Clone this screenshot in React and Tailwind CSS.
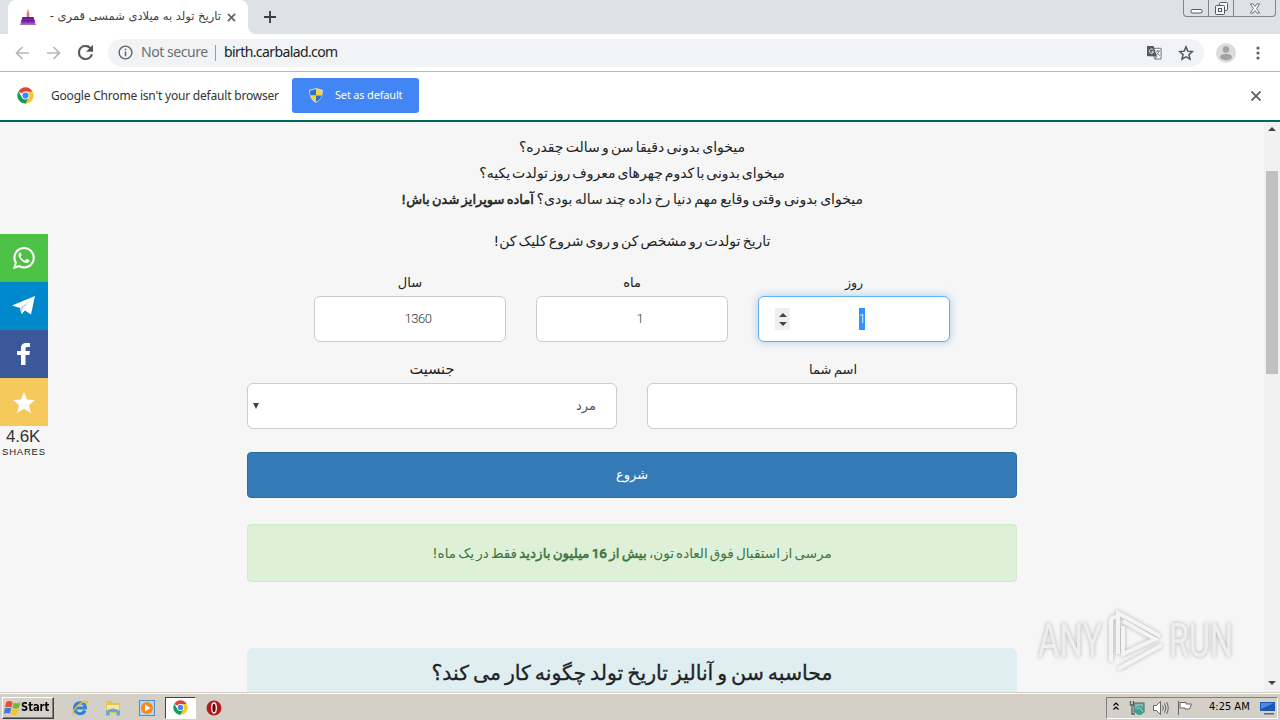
import React from "react";

const FA = "font-['DejaVu_Sans',sans-serif]";

function ChromeLogo({ className }) {
  return (
    <svg viewBox="0 0 48 48" className={className}>
      <circle cx="24" cy="24" r="23" fill="#fff" />
      <path d="M24 24 L4.1 12.5 A23 23 0 0 1 43.9 12.5 Z" fill="#db4437" />
      <path d="M24 13 H44.2 A23 23 0 0 1 24 47 L33.5 29.5 Z" fill="#fbc52d" />
      <path d="M4.1 12.5 A23 23 0 0 0 24 47 L33.5 29.5 L24 34 L14.5 29.5 Z" fill="#0f9d58" />
      <circle cx="24" cy="24" r="11" fill="#fff" />
      <circle cx="24" cy="24" r="8.7" fill="#4285f4" />
    </svg>
  );
}

function TabStrip() {
  return (
    <div className="flex h-[34px] shrink-0 items-start bg-[#dee1e6]">
      <div className="ml-2 flex h-[34px] w-[240px] items-center rounded-t-lg bg-white pl-3">
        <svg viewBox="0 0 16 16" className="h-4 w-4 shrink-0">
          <rect x="6.700" y="3" width="2.600" height="6" fill="#ef6b7b" />
          <path d="M8 0 C9.500 2 9.200 4 8 4 C6.800 4 6.500 2 8 0" fill="#f7a54a" />
          <rect x="2" y="8" width="12" height="4" rx="1" fill="#6a1b9a" />
          <rect x="1" y="10.500" width="14" height="4.500" rx="1" fill="#9b34b8" />
          <path d="M2 11 H14 V12 L12 13 L10 12 L8 13.500 L6 12 L4 13 L2 12 Z" fill="#6a1b9a" />
          <rect x="0" y="14.500" width="16" height="1.500" fill="#9c7bb0" />
        </svg>
        <div dir="rtl" className={`ml-[10px] flex h-5 w-[175px] items-center whitespace-nowrap text-[11.5px] text-[#3c4043] ${FA}`}>
          تاریخ تولد به میلادی شمسی قمری -
        </div>
        <svg viewBox="0 0 10 10" className="ml-[6px] h-[9px] w-[9px] shrink-0">
          <path d="M1 1 L9 9 M9 1 L1 9" stroke="#5f6368" strokeWidth="1.900" />
        </svg>
      </div>
      <svg viewBox="0 0 8 8" className="h-2 w-2 self-end"><path d="M0 0 V8 H8 A8 8 0 0 1 0 0" fill="#fff" /></svg>
      <svg viewBox="0 0 12 12" className="mt-[11px] ml-2 h-3 w-3"><path d="M6 0 V12 M0 6 H12" stroke="#3c4043" strokeWidth="1.900" /></svg>
      <div className="mr-1 ml-auto flex h-[17px] w-[93px] rounded-b border border-t-0 border-[#80848c] bg-[#dfe1e6]">
        <div className="flex w-[25px] items-center justify-center border-r border-[#80848c]">
          <svg viewBox="0 0 13 13" className="h-[13px] w-[13px]"><rect x="1" y="7.500" width="11" height="3.500" rx="1" fill="#fff" stroke="#555a62" /></svg>
        </div>
        <div className="flex w-[25px] items-center justify-center border-r border-[#80848c]">
          <svg viewBox="0 0 13 13" className="h-[13px] w-[13px]" fill="#f4f5f6" stroke="#555a62"><rect x="4.500" y=".5" width="8" height="8" rx="1" /><rect x=".5" y="3.500" width="9" height="9" rx="1" /><rect x="3.500" y="6.500" width="3" height="3" /></svg>
        </div>
        <div className="flex flex-1 items-center justify-center">
          <svg viewBox="0 0 12 12" className="h-[11px] w-3"><path d="M1 1 H4 L6 3.800 L8 1 H11 L7.700 6 L11 11 H8 L6 8.200 L4 11 H1 L4.300 6 Z" fill="#fff" stroke="#555a62" strokeWidth=".9" /></svg>
        </div>
      </div>
    </div>
  );
}

function Toolbar() {
  return (
    <div className="flex h-[38px] shrink-0 items-center border-b border-[#b4b6b8] bg-white">
      <svg viewBox="0 0 14 14" className="ml-[15px] h-[14px] w-[14px]" fill="none" stroke="#b5b7ba" strokeWidth="1.700"><path d="M14 7 H1.500 M7.500 1 L1.500 7 L7.500 13" /></svg>
      <svg viewBox="0 0 14 14" className="ml-[18px] h-[14px] w-[14px]" fill="none" stroke="#b5b7ba" strokeWidth="1.700"><path d="M0 7 H12.500 M6.500 1 L12.500 7 L6.500 13" /></svg>
      <svg viewBox="4 4 16 16" className="ml-[17px] h-[15px] w-[15px]"><path d="M17.650 6.350A7.960 7.960 0 0 0 12 4a8 8 0 1 0 7.730 10h-2.080A6 6 0 1 1 12 6c1.660 0 3.140.69 4.220 1.780L13 11h7V4z" fill="#505357" stroke="#505357" strokeWidth=".4" /></svg>
      <div className="ml-[15px] flex h-7 w-[1096px] items-center rounded-full bg-[#f1f3f4] pl-[10px]">
        <svg viewBox="0 0 16 16" className="h-[15px] w-[15px] shrink-0"><circle cx="8" cy="8" r="6.800" fill="none" stroke="#5f6368" strokeWidth="1.500" /><path d="M8 7 V12 M8 4 V5.700" stroke="#5f6368" strokeWidth="1.600" /></svg>
        <div className="mb-[2px] ml-2 w-[67px] whitespace-nowrap font-['Noto_Sans',sans-serif] text-[14px] leading-5 tracking-[-0.45px] text-[#6b6f74]">Not secure</div>
        <div className="ml-[7px] h-4 w-px bg-[#9a9da1]" />
        <div className="mb-[2px] ml-2 whitespace-nowrap font-['Noto_Sans',sans-serif] text-[14px] leading-5 tracking-[-0.6px] text-[#202124]">birth.carbalad.com</div>
        <svg viewBox="0 0 16 16" className="mr-[16px] ml-auto h-[15px] w-[15px]">
          <path d="M7 3.500 H15 V15 H8.500 L7 12" fill="#f6f7f8" stroke="#6b6f74" />
          <path d="M0 1 H7 L10.500 12 H1 Q0 12 0 11 Z" fill="#55595e" />
          <path d="M6.700 5.300 A2.300 2.300 0 1 0 7 7.200 H4.800" fill="none" stroke="#fff" strokeWidth="1" />
          <path d="M9.500 6.500 H14 M11.500 5.500 V6.500 M13 6.500 Q12 9.500 10 10.500 M10.500 8 L13.500 11.500 M8 12 L10.500 12 L8.500 15" fill="none" stroke="#6b6f74" strokeWidth=".9" />
        </svg>
        <svg viewBox="0 0 24 24" className="mr-[10px] h-4 w-4"><path d="M12 2.800 L14.700 9.200 L21.600 9.800 L16.400 14.400 L18 21.200 L12 17.600 L6 21.200 L7.600 14.400 L2.400 9.800 L9.300 9.200 Z" fill="none" stroke="#505357" strokeWidth="2.200" /></svg>
      </div>
      <svg viewBox="0 0 20 20" className="ml-3 h-5 w-5"><circle cx="10" cy="10" r="10" fill="#dcdcdc" /><circle cx="10" cy="6.500" r="3.200" fill="#a3a3a3" /><ellipse cx="10" cy="14" rx="6" ry="3.200" fill="#a3a3a3" /></svg>
      <svg viewBox="0 0 4 14" className="ml-5 h-[14px] w-1" fill="#5f6368"><circle cx="2" cy="2" r="1.600" /><circle cx="2" cy="7" r="1.600" /><circle cx="2" cy="12" r="1.600" /></svg>
    </div>
  );
}

function InfoBar() {
  return (
    <div className="flex h-[48px] shrink-0 items-center bg-white pb-px pl-[17px]">
      <ChromeLogo className="h-[17px] w-[17px]" />
      <div className="ml-[17px] w-[228px] whitespace-nowrap font-['Noto_Sans',sans-serif] text-[12px] tracking-[-0.2px] text-[#333]">Google Chrome isn't your default browser</div>
      <div className="ml-[13px] flex h-[35px] w-[127px] items-center rounded-[3px] bg-[#4285f4] pl-[17px]">
        <svg viewBox="0 0 14 15" className="h-[15px] w-[14px]">
          <path d="M7 0 L14 2 Q14 11 7 15 Q0 11 0 2 Z" fill="#d8dde0" />
          <path d="M7 1 V7.500 H1.300 Q1 5 1 2.700 Z" fill="#2f6fd0" />
          <path d="M7 1 L13 2.700 Q13 5 12.700 7.500 H7 Z" fill="#f8d33c" />
          <path d="M1.300 7.500 H7 V14 Q2.500 11.500 1.300 7.500" fill="#f8d33c" />
          <path d="M12.700 7.500 H7 V14 Q11.500 11.500 12.700 7.500" fill="#2f6fd0" />
        </svg>
        <span className="ml-3 whitespace-nowrap font-['Noto_Sans',sans-serif] text-[11px] tracking-[-0.18px] text-white">Set as default</span>
      </div>
      <svg viewBox="0 0 10 10" className="mr-[19px] ml-auto h-[10px] w-[10px]"><path d="M.5 .5 L9.500 9.500 M9.500 .5 L.5 9.500" stroke="#5f6368" strokeWidth="1.900" /></svg>
    </div>
  );
}

function ShareBar() {
  return (
    <div className="absolute top-[112px] left-0 flex w-12 flex-col font-['Liberation_Sans',sans-serif]">
      <div className="flex h-12 items-center justify-center bg-[#4dc247]">
        <svg viewBox="0 0 24 24" className="h-6 w-6" fill="#fff"><path d="M12.040 1C6.100 1 1.400 5.800 1.400 11.700c0 2 .5 3.700 1.400 5.300L1 23l6.200-1.700a10.700 10.700 0 0 0 4.900 1.200c5.900 0 10.700-4.800 10.700-10.800S18 1 12.040 1zm0 2.100c4.800 0 8.700 3.900 8.700 8.600 0 4.800-3.900 8.700-8.700 8.700-1.700 0-3.200-.5-4.500-1.300l-3.500.9.900-3.400a8.600 8.600 0 0 1-1.400-4.900c0-4.700 3.800-8.600 8.500-8.600z" /><path d="M8.300 6.500c-.4 0-.8.200-1.100.6-.8.900-.9 2-.6 3 .9 3 4.200 6.400 7.400 7 1.800.3 3.400-.7 3.500-2.500 0-.3 0-.4-.3-.5l-2.200-1c-.3-.1-.5-.1-.7.200l-.9 1.100c-.2.200-.4.200-.7.100-1.700-.7-3-1.900-3.900-3.600-.1-.2-.1-.4.100-.6l.7-.9c.1-.2.2-.4.100-.6l-1-2.100c-.1-.2-.2-.2-.4-.2z" /></svg>
      </div>
      <div className="flex h-12 items-center justify-center bg-[#0088cc]">
        <svg viewBox="0 0 24 20" className="h-5 w-6"><path d="M0 9.500 L23 0 L19 18.500 L13 14.500 L9.500 18 L8 12 Z" fill="#fff" /><path d="M8 12 L18 4.500 L10.500 13 L9.500 18 Z" fill="#b9d9ea" /></svg>
      </div>
      <div className="flex h-12 items-center justify-center bg-[#3b5998]">
        <svg viewBox="0 0 14 22" className="h-[22px] w-[14px]" fill="#fff"><path d="M4 22 V12 H0 V8 H4 V5.300 C4 1.800 6 0 9.300 0 H13 V4 H10.500 C9 4 8.500 4.600 8.500 6 V8 H13 L12.400 12 H8.500 V22 Z" /></svg>
      </div>
      <div className="flex h-12 items-center justify-center bg-[#f6c95c]">
        <svg viewBox="0 0 22 21" className="h-[21px] w-[22px]" fill="#fff"><path d="M11 0 L14 7.500 L22 8 L15.900 13.200 L17.900 21 L11 16.700 L4.100 21 L6.100 13.200 L0 8 L8 7.500 Z" /></svg>
      </div>
      <div className="mt-[2px] pr-[2px] text-center text-[17px] leading-[18px] tracking-[-0.2px] text-[#333]">4.6K</div>
      <div className="pl-[2px] text-[9.500px] leading-3 tracking-[0.800px] whitespace-nowrap text-[#222]">SHARES</div>
    </div>
  );
}

function Label({ children, className = "text-[13px]" }) {
  return <div className={`flex h-[26px] items-center justify-center whitespace-nowrap text-[#222] ${className}`}>{children}</div>;
}

const box = "flex h-[46px] items-center rounded-md border border-[#ccc] bg-white";

function Form() {
  return (
    <div className="flex w-[770px] flex-col" dir="rtl">
      <div className="mt-4 flex justify-center gap-[30px]">
        <div className="w-[192px]">
          <Label className="text-[12.5px]">روز</Label>
          <div className="flex h-[46px] items-center rounded-md border border-[#66afe9] bg-white shadow-[0_0_8px_rgba(102,175,233,0.6)]" dir="ltr">
            <div className="ml-4 flex h-[22px] w-[15px] flex-col items-center justify-center gap-[5px] bg-[#efefef]">
              <svg viewBox="0 0 8 4" className="h-1 w-2"><path d="M4 0 L8 4 H0 Z" fill="#444" /></svg>
              <svg viewBox="0 0 8 4" className="h-1 w-2"><path d="M0 0 H8 L4 4 Z" fill="#444" /></svg>
            </div>
            <div className="ml-[69px] flex h-[22px] w-[6px] items-center justify-center bg-[#3390ff] font-['Roboto',sans-serif] text-[13px] font-light text-white">1</div>
          </div>
        </div>
        <div className="w-[192px]">
          <Label>ماه</Label>
          <div className={`${box} justify-center pl-4 font-['Roboto',sans-serif] text-[13px] font-light text-[#333]`}>1</div>
        </div>
        <div className="w-[192px]">
          <Label>سال</Label>
          <div className={`${box} justify-center pl-4 font-['Roboto',sans-serif] text-[13px] font-light tracking-[-0.5px] text-[#333]`}>1360</div>
        </div>
      </div>
      <div className="mt-[15px] flex gap-[30px]">
        <div className="w-[370px]"><Label className="pl-[2px] text-[13px] [word-spacing:-1.5px]">اسم شما</Label><div className={box} /></div>
        <div className="w-[370px]">
          <Label className="text-[14.5px]">جنسیت</Label>
          <div className={`${box} justify-between pr-5 pl-[5px] text-[13px] text-[#555]`}>
            <span>مرد</span>
            <svg viewBox="0 0 6 6" className="h-[6px] w-[6px]"><path d="M0 0 H6 L3 6 Z" fill="#444" /></svg>
          </div>
        </div>
      </div>
      <div className="mt-[23px] flex h-[46px] items-center justify-center rounded border border-[#2e6da4] bg-[#337ab7] text-[13px] text-white">شروع</div>
      <div className="mt-[26px] flex h-[58px] items-center justify-center rounded border border-[#d0e9c6] bg-[#dff0d8] text-[13.500px] whitespace-nowrap text-[#3c763d] [word-spacing:-2.100px]">
        <p>مرسی از استقبال فوق العاده تون، <span className="[-webkit-text-stroke:0.5px_#3c763d]">بیش از <span className="font-['Roboto',sans-serif] font-medium">16</span> میلیون بازدید</span> فقط در یک ماه!</p>
      </div>
      <div className="mt-[66px] flex h-[60px] shrink-0 justify-center rounded-t-md bg-[#deeef1] pt-[6px] text-[20.500px] leading-[38px] whitespace-nowrap text-[#222] [-webkit-text-stroke:0.3px_#222] [word-spacing:-2.600px]">
        <h2>محاسبه سن و آنالیز تاریخ تولد چگونه کار می کند؟</h2>
      </div>
    </div>
  );
}

function Watermark() {
  return (
    <div className="absolute top-[486px] left-[1038px] flex h-[66px] w-[200px] items-center opacity-90 drop-shadow-[0_0_2px_rgba(0,0,0,0.3)]">
      <div className="w-[68px] font-['Roboto',sans-serif] text-[49px] leading-[66px] text-[#eee]"><span className="inline-block origin-left scale-x-[0.67]">ANY</span></div>
      <svg viewBox="0 0 60 66" className="h-[66px] w-[60px] shrink-0" fill="none" stroke="#f4f4f4" strokeWidth="4">
        <path d="M5 54 V13 Q5 9 10 9" /><path d="M12 46 V5 L54 28 M17 18 V46 L49 31 L17 13 M12 61 L56 37" />
      </svg>
      <div className="ml-[3px] font-['Roboto',sans-serif] text-[49px] leading-[66px] text-[#eee]"><span className="inline-block origin-left scale-x-[0.66]">RUN</span></div>
    </div>
  );
}

function Page() {
  return (
    <div className="relative flex h-[572px] shrink-0 overflow-hidden border-t-2 border-[#00695c] bg-[#f6f6f6]">
      <div className={`flex h-[570px] w-[1264px] shrink-0 flex-col items-center overflow-hidden ${FA}`}>
        <div dir="rtl" className="mt-3 flex flex-col items-center text-[14px] leading-[26px] whitespace-nowrap text-[#222]">
          <p className="[word-spacing:-2.200px]">میخوای بدونی دقیقا سن و سالت چقدره؟</p>
          <p className="[word-spacing:-2.500px]">میخوای بدونی با کدوم چهرهای معروف روز تولدت یکیه؟</p>
          <p className="h-[26px] [word-spacing:-1.800px]">میخوای بدونی وقتی وقایع مهم دنیا رخ داده چند ساله بودی؟ <span className="text-[13px] [-webkit-text-stroke:0.5px_#222]">آماده سوپرایز شدن باش!</span></p>
          <p className="mt-4 [word-spacing:-2.300px]">تاریخ تولدت رو مشخص کن و روی شروع کلیک کن!</p>
        </div>
        <Form />
      </div>
      <div className="flex h-full w-4 shrink-0 flex-col items-center bg-[#f1f1f1]">
        <svg viewBox="0 0 8 4" className="mt-[5px] h-1 w-2"><path d="M4 0 L8 4 H0 Z" fill="#444" /></svg>
        <div className="mt-10 h-[203px] w-3 bg-[#c1c1c1]" />
        <svg viewBox="0 0 8 4" className="mt-auto mb-[7px] h-1 w-2"><path d="M0 0 H8 L4 4 Z" fill="#444" /></svg>
      </div>
      <ShareBar />
      <Watermark />
    </div>
  );
}

function Taskbar() {
  return (
    <div className="flex h-7 shrink-0 items-center border-t border-[#d4d0c8] bg-[#d4d0c8] shadow-[inset_0_1px_0_#fff]">
      <div className="mt-[2px] ml-[2px] flex h-[22px] w-[52px] items-center border border-t-white border-r-[#404040] border-b-[#404040] border-l-white pl-px shadow-[inset_-1px_-1px_0_#808080]">
        <svg viewBox="0 0 16 15" className="h-4 w-[17px] shrink-0">
          <path d="M2 2 Q5 0 8 2 L7 7 Q4 5.500 1 7 Z" fill="#e8502b" /><path d="M9 2.500 Q12 4 15.500 2 L14 7.500 Q11 9 8 7.500 Z" fill="#76b82a" />
          <path d="M.8 8 Q4 6.500 6.800 8 L5.500 13 Q3 11.500 0 13 Z" fill="#3a7bd5" /><path d="M7.700 8.500 Q11 10 14 8.500 L12.500 13.500 Q9.500 15 6.500 13.500 Z" fill="#fbc02d" />
        </svg>
        <span className="w-7 font-['DejaVu_Sans_Condensed','DejaVu_Sans',sans-serif] text-[11.5px] font-bold text-black"><span className="inline-block origin-left scale-x-[0.96]">Start</span></span>
      </div>
      <svg viewBox="0 0 16 16" className="mt-[2px] ml-[18px] h-4 w-4"><path d="M13 10.500 A5.500 5.500 0 1 1 13.500 8 H4" fill="none" stroke="#2a84d8" strokeWidth="3" /><path d="M2 15 C-2 12 8 1 15 1.500 Q16 2.500 14 5" fill="none" stroke="#e9b93a" strokeWidth="1.300" /></svg>
      <svg viewBox="0 0 16 16" className="mt-[2px] ml-[17px] h-4 w-4"><path d="M1 1 H7 L8 3 H15 V13 H1 Z" fill="#e3c35c" /><path d="M2 5 H14 V11 H2 Z" fill="#f7e79a" /><path d="M1 15.500 V11 Q8 6 15 11 V15.500 H11.500 V12 H4.500 V15.500 Z" fill="#5fa9db" /></svg>
      <svg viewBox="0 0 16 16" className="mt-[2px] ml-[18px] h-4 w-4"><rect x=".5" y=".5" width="15" height="15" fill="#b5d7f1" stroke="#4f8fc4" /><circle cx="8" cy="8" r="6" fill="#f28b1e" /><path d="M6 4.500 L11.500 8 L6 11.500 Z" fill="#fff" /></svg>
      <div className="mt-[2px] ml-[10px] flex h-[22px] w-[31px] items-center justify-center border border-t-[#404040] border-r-white border-b-white border-l-[#404040] bg-white"><ChromeLogo className="h-[15px] w-[15px]" /></div>
      <svg viewBox="0 0 16 16" className="mt-[2px] ml-[10px] h-4 w-4"><circle cx="8" cy="8" r="7.500" fill="#b51a1d" /><ellipse cx="8" cy="8" rx="2.300" ry="5" fill="#65090b" stroke="#fff" strokeWidth="1.300" /></svg>
      <div className="mt-[2px] mr-[2px] ml-auto flex h-[22px] w-[172px] items-center border border-t-[#808080] border-r-white border-b-white border-l-[#808080] pl-[6px]">
        <svg viewBox="0 0 6 8" className="mb-1 h-2 w-[6px]" fill="none" stroke="#000" strokeWidth="1.200"><path d="M.5 3.500 L3 1 L5.500 3.500 M.5 7.500 L3 5 L5.500 7.500" /></svg>
        <svg viewBox="0 0 16 16" className="ml-[10px] h-4 w-4"><rect x="5" y="3" width="10" height="9" fill="#8ab6b2" stroke="#4a6563" /><path d="M1.500 1 V5 H4.500 V1 M3 5 V14 H6" fill="none" stroke="#4a6563" strokeWidth="1.300" /><circle cx="10.500" cy="10.500" r="4.500" fill="#3aa18e" /><path d="M7.500 9 Q10 6 12 9 T14 12" stroke="#9fe0d0" fill="none" /></svg>
        <svg viewBox="0 0 16 16" className="ml-2 h-4 w-4" fill="none" stroke="#666"><path d="M.5 5.500 H3.500 L7.500 1.500 V14.500 L3.500 10.500 H.5 Z" fill="#fff" /><path d="M9.500 5.500 Q11.500 8 9.500 10.500 M11.500 3.500 Q14.500 8 11.500 12.500 M13.500 2 Q17 8 13.500 14" /></svg>
        <svg viewBox="0 0 16 16" className="ml-2 h-4 w-4" fill="#fff" stroke="#666"><path d="M1.500 1 V15 M3 2.500 H9 V4 H14.500 L12.500 9 H8 V8 H3 Z" /></svg>
        <span className="ml-4 w-[42px] font-['DejaVu_Sans_Condensed','DejaVu_Sans',sans-serif] text-[11px] whitespace-nowrap text-black">4:25 AM</span>
        <svg viewBox="0 0 16 14" className="ml-[9px] h-[14px] w-4"><path d="M0 1 H15 V10 H0 Z" fill="#1d56b5" /><path d="M1 2 H14 L1 8 Z" fill="#4a8ae0" /><path d="M4 12 H14 V13.500 H4 Z" fill="#5b6470" /></svg>
      </div>
    </div>
  );
}

export default function App() {
  return (
    <div className="flex h-[720px] w-[1280px] flex-col overflow-hidden bg-white">
      <TabStrip />
      <Toolbar />
      <InfoBar />
      <Page />
      <Taskbar />
    </div>
  );
}
